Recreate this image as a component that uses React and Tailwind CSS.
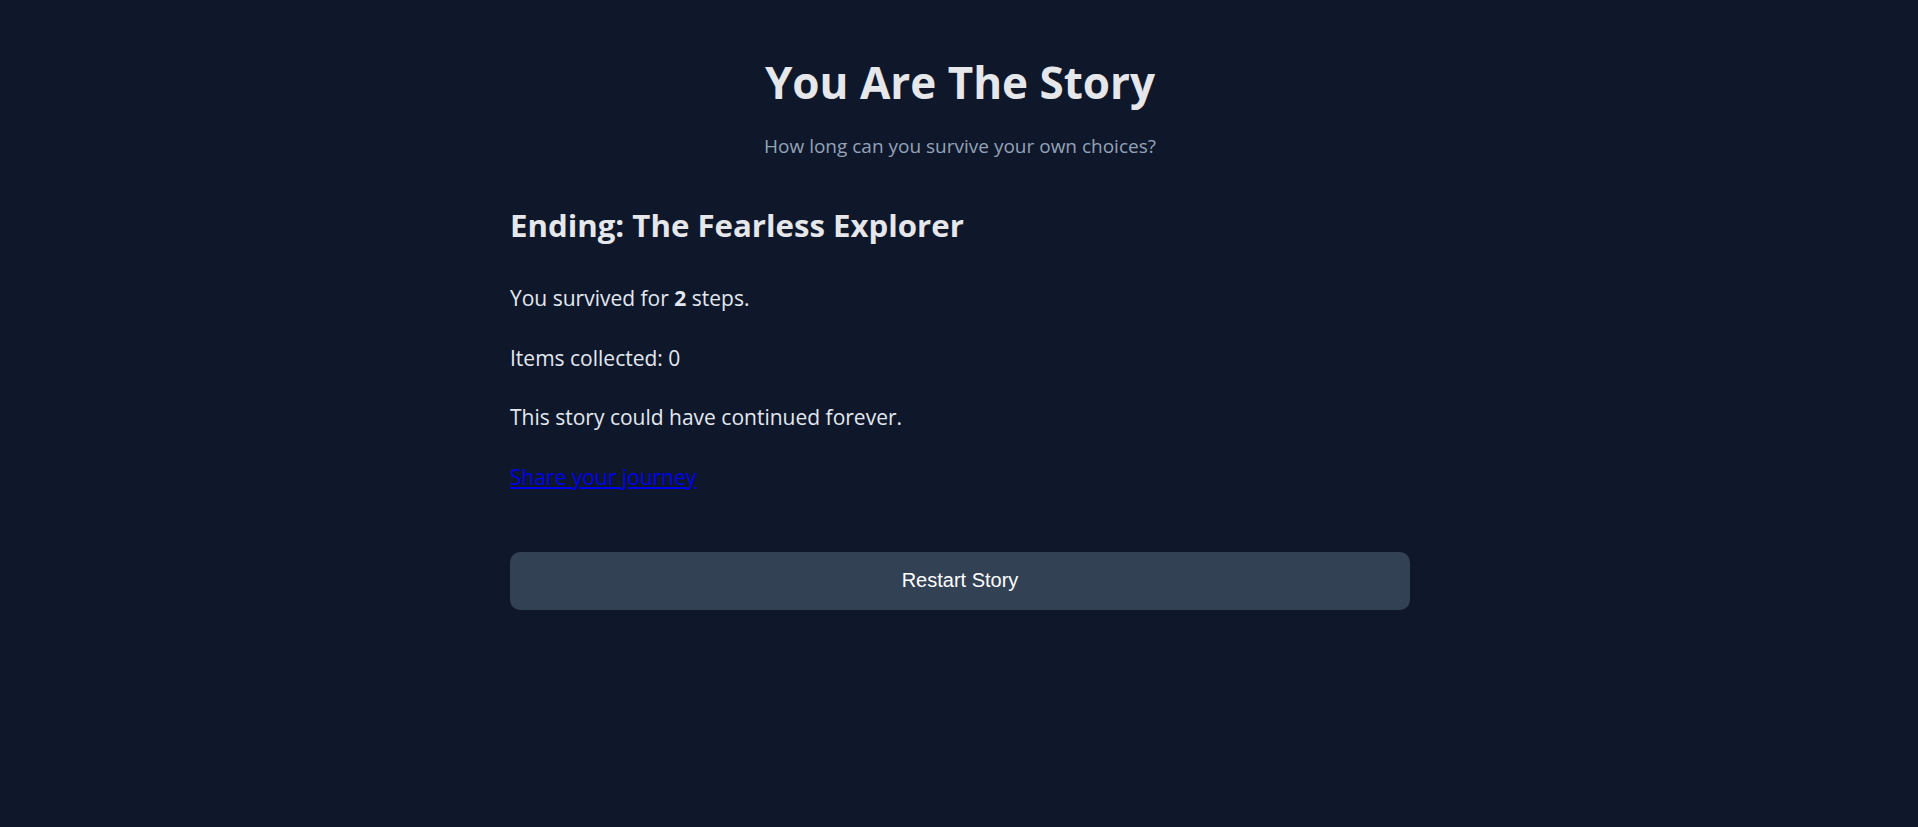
import React from "react";

const font = { fontFamily: '"Open Sans", "Noto Sans", sans-serif' };

function App() {
  return (
    <div className="min-h-screen bg-[#0f172a] text-[#e2e8f0]" style={font}>
      <div className="max-w-[900px] mx-auto pt-[55px] translate-x-[1px]">
        <h1 className="text-center text-[44px] leading-[54px] font-bold text-[#e5e7eb]">
          You Are The Story
        </h1>
        <p className="text-center text-[19px] leading-[30px] text-[#94a3b8] mt-[22px]">
          How long can you survive your own choices?
        </p>

        <div className="mt-[44px]">
          <h2 className="text-[31.2px] leading-[40px] font-bold text-[#e5e7eb]">
            Ending: The Fearless Explorer
          </h2>
          <div className="mt-[36px] flex flex-col gap-[25.5px] text-[21px] leading-[34px]">
            <p>
              You survived for <strong>2</strong> steps.
            </p>
            <p>Items collected: 0</p>
            <p>This story could have continued forever.</p>
            <p>
              <a href="#" className="text-[#0000ee] underline">
                Share your journey
              </a>
            </p>
          </div>
        </div>

        <button
          className="w-full mt-[58px] h-[58px] pb-[2px] rounded-[10px] bg-[#334155] text-white text-[20px]"
          style={{ fontFamily: '"Liberation Sans", Arial, sans-serif' }}
        >
          Restart Story
        </button>
      </div>
    </div>
  );
}

export default App;
